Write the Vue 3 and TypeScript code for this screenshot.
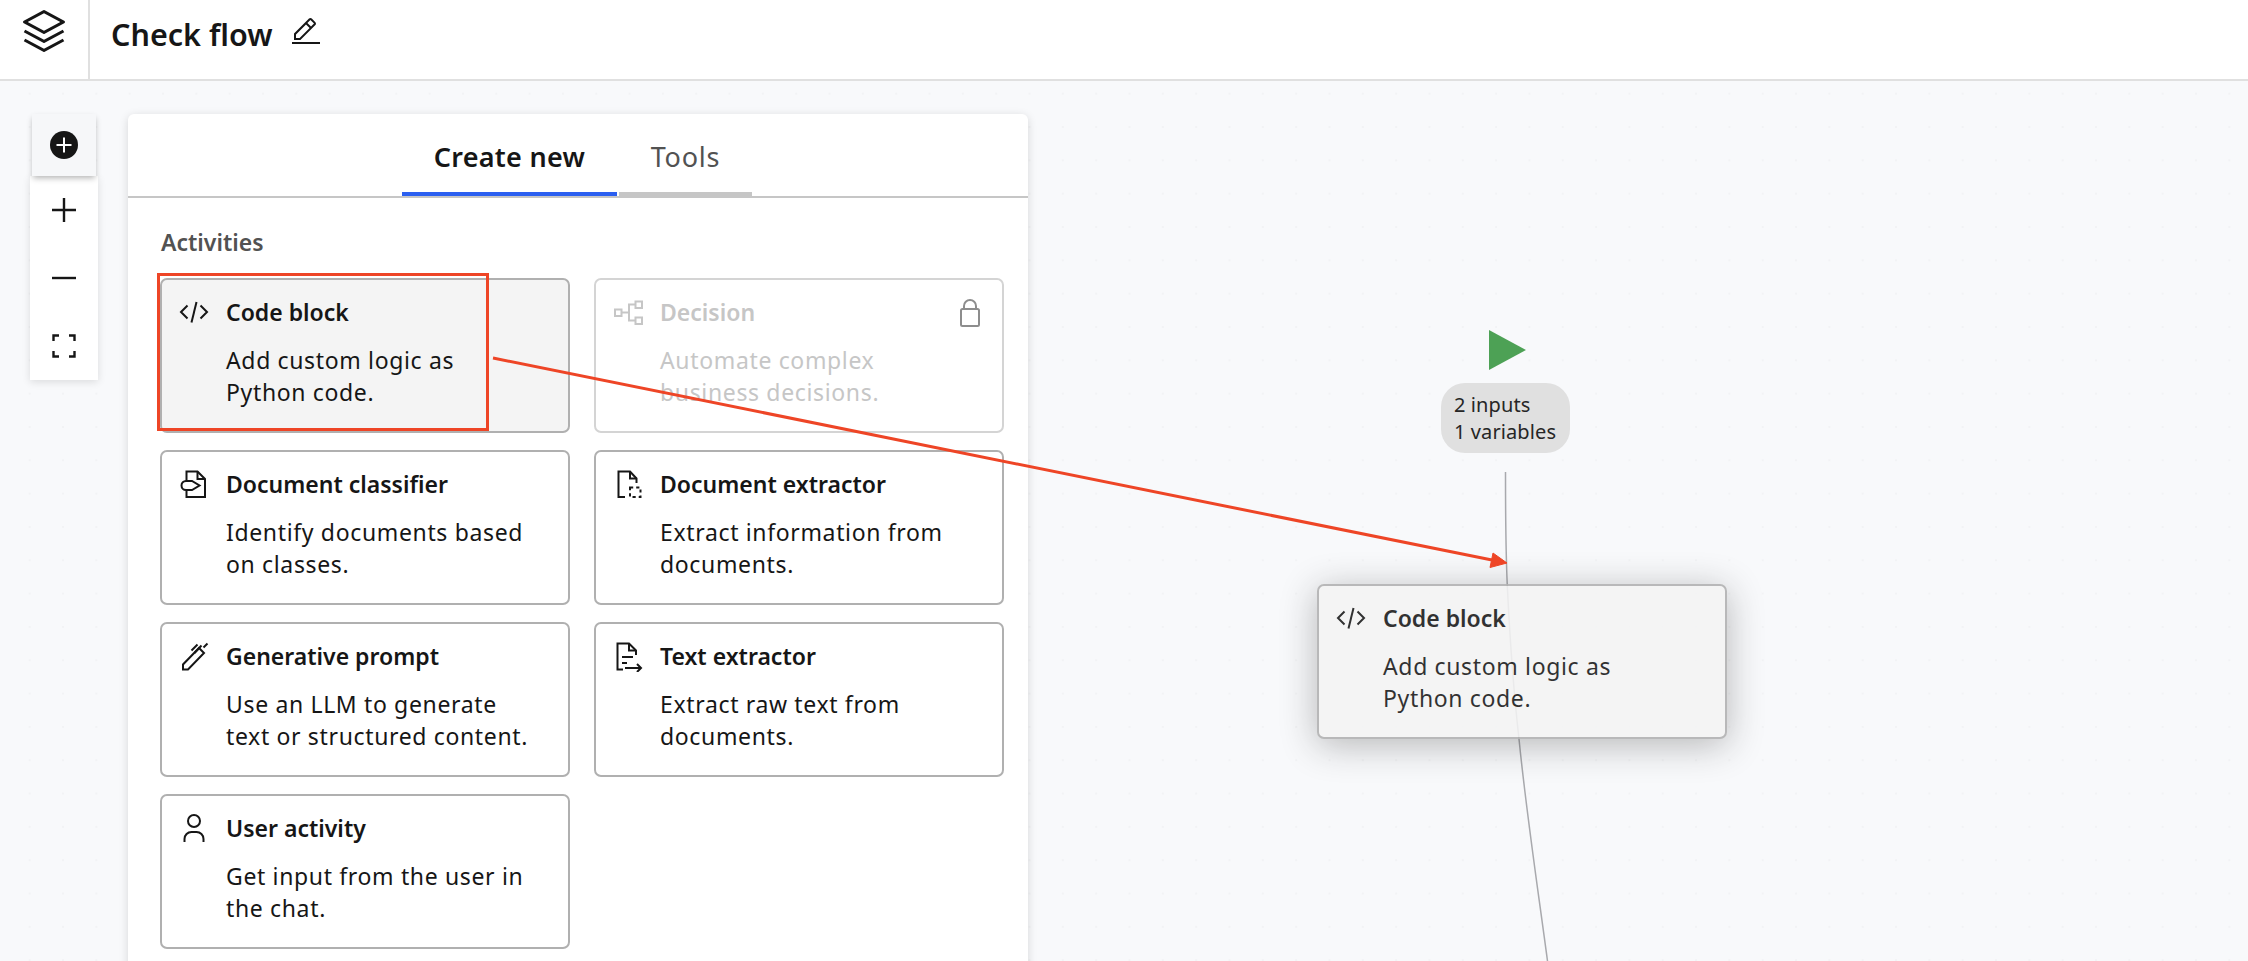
<script setup lang="ts">
interface IconPath { d: string; dash?: string }
interface Card { title: string; lines: string[]; icon: IconPath[]; hover?: boolean; disabled?: boolean }

const codeIcon: IconPath[] = [
  { d: 'M9.5 9.5 3 16l6.5 6.5' },
  { d: 'M22.5 9.5 29 16l-6.5 6.5' },
  { d: 'M18.5 6l-5 20.5' },
]

const cards: Card[] = [
  { title: 'Code block', lines: ['Add custom logic as', 'Python code.'], hover: true, icon: codeIcon },
  {
    title: 'Decision', lines: ['Automate complex', 'business decisions.'], disabled: true,
    icon: [
      { d: 'M3 13.5h6.5v6.5H3z' }, { d: 'M9.5 16.5H17' }, { d: 'M23 8.5h-6v16h6' },
      { d: 'M23.5 5.5H30v6.5h-6.5z' }, { d: 'M23.5 21.5H30V28h-6.5z' },
    ],
  },
  {
    title: 'Document classifier', lines: ['Identify documents based', 'on classes.'],
    icon: [
      { d: 'M8.5 12.5V3.5h11L27 11v18H8.5v-6.5' }, { d: 'M19.5 3.5V11H27' },
      { d: 'M8 13h6l7.5 4.5L14 22H8a4.5 4.5 0 0 1 0-9z' },
    ],
  },
  {
    title: 'Document extractor', lines: ['Extract information from', 'documents.'],
    icon: [
      { d: 'M13 29H6.5V3.5H18l6.5 7V15' }, { d: 'M18 3.5V10.500h6.500' },
      { d: 'M18 19.500h10.500V29H18z', dash: '3.200 3' },
    ],
  },
  {
    title: 'Generative prompt', lines: ['Use an LLM to generate', 'text or structured content.'],
    icon: [
      { d: 'M5 29.500v-5L21 8l5 5L10 29.500z' }, { d: 'M13.500 10.500l6-6' },
      { d: 'M16.500 13l7-7.500' }, { d: 'M25.500 7.500 29.500 3.500' },
    ],
  },
  {
    title: 'Text extractor', lines: ['Extract raw text from', 'documents.'],
    icon: [
      { d: 'M11 29.500H5.500V3.500H17l7 7V15' }, { d: 'M17 3.500V10.500h7' },
      { d: 'M10 17h11' }, { d: 'M10 23h5' }, { d: 'M13 28h16' }, { d: 'M25 24l4 4-4 4' },
    ],
  },
  {
    title: 'User activity', lines: ['Get input from the user in', 'the chat.'],
    icon: [
      { d: 'M16 3a6 6 0 1 1 0 12 6 6 0 0 1 0-12z' },
      { d: 'M6.500 30v-3a7 7 0 0 1 7-7h5a7 7 0 0 1 7 7v3' },
    ],
  },
]
</script>

<template>
  <div class="page">
    <header class="topbar">
      <div class="logo">
        <svg width="48" height="48" viewBox="0 0 32 32" fill="#161616">
          <path d="M16 24a1 1 0 0 1-.47-.12l-13-7 .94-1.76L16 21.860l12.530-6.740.94 1.760-13 7A1 1 0 0 1 16 24z" />
          <path d="M16 30a1 1 0 0 1-.47-.12l-13-7 .94-1.760L16 27.860l12.530-6.740.94 1.760-13 7A1 1 0 0 1 16 30z" />
          <path d="M16 18a1 1 0 0 1-.47-.12l-13-7a1 1 0 0 1 0-1.760l13-7a1 1 0 0 1 .94 0l13 7a1 1 0 0 1 0 1.760l-13 7A1 1 0 0 1 16 18zM5.110 10 16 15.860 26.890 10 16 4.140z" />
        </svg>
      </div>
      <h1 class="title">Check flow</h1>
      <svg class="edit" width="32" height="32" viewBox="0 0 32 32" fill="#161616">
        <path d="M2 26h28v2H2zM25.400 9c.8-.8.8-2 0-2.800l-3.600-3.600c-.8-.8-2-.8-2.800 0L4 17.600V24h6.400L25.400 9zM20.400 4 24 7.600l-3 3L17.400 7l3-3zM6 22v-3.600l10-10 3.600 3.600-10 10H6z" />
      </svg>
    </header>

    <main class="canvas">
      <svg class="edges" viewBox="0 81 2248 880" width="2248" height="880" fill="none">
        <path d="M1505.500 472C1505.500 520 1506 560 1507.500 590C1510 640 1514 695 1519 739C1526 810 1538 890 1547.500 961" stroke="#a8a9ad" stroke-width="1.500" />
      </svg>

      <div class="toolbar">
        <button class="tool tool-active" type="button" aria-label="Add">
          <svg width="28" height="28" viewBox="0 0 28 28">
            <circle cx="14" cy="14" r="14" fill="#161616" />
            <path d="M14 6.500v15M6.500 14h15" stroke="#fff" stroke-width="2" />
          </svg>
        </button>
        <div class="tool-group">
          <button class="tool" type="button" aria-label="Zoom in">
            <svg width="24" height="24" viewBox="0 0 24 24"><path d="M12 0v24M0 12h24" stroke="#161616" stroke-width="2.400" fill="none" /></svg>
          </button>
          <button class="tool" type="button" aria-label="Zoom out">
            <svg width="24" height="24" viewBox="0 0 24 24"><path d="M0 12h24" stroke="#161616" stroke-width="2.400" fill="none" /></svg>
          </button>
          <button class="tool" type="button" aria-label="Fit to screen">
            <svg width="24" height="24" viewBox="0 0 24 24" fill="none" stroke="#161616" stroke-width="2.400">
              <path d="M7 1.500H1.500V7M17 1.500h5.500V7M7 22.500H1.500V17M17 22.500h5.500V17" />
            </svg>
          </button>
        </div>
      </div>

      <section class="panel">
        <nav class="tabs">
          <span class="tab tab-on">Create new</span>
          <span class="tab tab-off">Tools</span>
        </nav>
        <div class="panel-body">
          <h2 class="section">Activities</h2>
          <div class="grid">
            <article
              v-for="c in cards"
              :key="c.title"
              class="card"
              :class="{ hover: c.hover, disabled: c.disabled }"
            >
              <svg class="icon" width="32" height="32" viewBox="0 0 32 32" fill="none" stroke-width="2">
                <path
                  v-for="(p, i) in c.icon"
                  :key="i"
                  :d="p.d"
                  :stroke-dasharray="p.dash"
                  stroke="currentColor"
                />
              </svg>
              <div class="card-text">
                <h3 class="card-title">{{ c.title }}</h3>
                <p v-for="l in c.lines" :key="l" class="card-line">{{ l }}</p>
              </div>
              <svg v-if="c.disabled" class="lock" width="20" height="28" viewBox="0 0 20 28" fill="none" stroke="#8d8d8d" stroke-width="2">
                <path d="M4 10V7a6 6 0 0 1 12 0v3" />
                <rect x="1" y="10" width="18" height="17" rx="1.500" />
              </svg>
            </article>
          </div>
        </div>
      </section>

      <div class="play"></div>
      <div class="badge">
        <span>2 inputs</span>
        <span>1 variables</span>
      </div>

      <article class="card hover ghost">
        <svg class="icon" width="32" height="32" viewBox="0 0 32 32" fill="none" stroke-width="2">
          <path v-for="(p, i) in codeIcon" :key="i" :d="p.d" stroke="currentColor" />
        </svg>
        <div class="card-text">
          <h3 class="card-title">Code block</h3>
          <p class="card-line">Add custom logic as</p>
          <p class="card-line">Python code.</p>
        </div>
      </article>

      <svg class="annot" viewBox="0 81 2248 880" width="2248" height="880" fill="none">
        <rect x="158.500" y="274.500" width="329" height="155" stroke="#ee4526" stroke-width="3" />
        <path d="M493 358 1492 560" stroke="#ee4526" stroke-width="3" />
        <path d="M1507 563 1490 567.500 1493 553z" fill="#ee4526" stroke="#ee4526" />
      </svg>
    </main>
  </div>
</template>

<style>
html, body { margin: 0; padding: 0; background: #fff; }
</style>

<style scoped>
.page {
  width: 2248px;
  height: 961px;
  display: flex;
  flex-direction: column;
  overflow: hidden;
  font-family: "Noto Sans", "Open Sans", sans-serif;
  color: #161616;
}
.topbar {
  height: 81px;
  flex: none;
  box-sizing: border-box;
  display: flex;
  align-items: center;
  background: #fff;
  border-bottom: 2px solid #e0e0e0;
}
.logo {
  width: 88px;
  height: 79px;
  flex: none;
  display: flex;
  justify-content: center;
  align-items: flex-start;
  border-right: 2px solid #e0e0e0;
}
.logo svg { margin-top: 7px; margin-left: -1px; }
.title {
  margin: -12px 0 0 21px;
  font-size: 30.500px;
  font-weight: 600;
  line-height: 40px;
}
.edit { margin: -16px 0 0 17px; }
.canvas {
  position: relative;
  flex: 1;
  overflow: hidden;
  background-color: #f8f9fb;
  background-image: radial-gradient(circle, #f2f3f5 1px, transparent 1.500px);
  background-size: 33.330px 33.330px;
  background-position: 13px -4px;
}
.edges, .annot { position: absolute; left: 0; top: 0; pointer-events: none; }
.annot { z-index: 5; }
.toolbar {
  position: absolute;
  left: 30px;
  top: 33px;
  width: 68px;
  display: flex;
  flex-direction: column;
  align-items: center;
}
.tool {
  width: 68px;
  height: 68px;
  padding: 0;
  border: 0;
  background: transparent;
  display: flex;
  align-items: center;
  justify-content: center;
}
.tool-active {
  position: relative;
  z-index: 1;
  width: 64px;
  height: 62px;
  background: #f6f7f9;
  box-shadow: 0 3px 6px -1px rgba(0, 0, 0, 0.3);
}
.tool-group {
  width: 68px;
  height: 204px;
  background: #fff;
  box-shadow: 0 2px 8px rgba(0, 0, 0, 0.12);
}
.panel {
  position: absolute;
  left: 128px;
  top: 33px;
  width: 900px;
  height: 900px;
  background: #fff;
  border-radius: 6px 6px 0 0;
  box-shadow: 0 2px 10px rgba(0, 0, 0, 0.14);
}
.tabs {
  height: 84px;
  box-sizing: border-box;
  display: flex;
  justify-content: center;
  gap: 2px;
  border-bottom: 2px solid #c6c6c6;
  padding-right: 2px;
}
.tab {
  box-sizing: border-box;
  height: 82px;
  border-bottom: 4px solid #c6c6c6;
  font-size: 27px;
  line-height: 86px;
  text-align: center;
  color: #525252;
}
.tab-on {
  width: 215px;
  font-weight: 600;
  letter-spacing: 0.3px;
  color: #161616;
  border-bottom-color: #2b5ff0;
}
.tab-off {
  width: 133px;
  letter-spacing: 0.8px;
}
.panel-body { padding: 27px 25px 0 32px; }
.section {
  margin: 0 0 19px 1px;
  font-size: 23px;
  line-height: 34px;
  font-weight: 600;
  color: #525252;
}
.grid {
  display: grid;
  grid-template-columns: 410px 410px;
  grid-auto-rows: 155px;
  column-gap: 24px;
  row-gap: 17px;
}
.card {
  position: relative;
  box-sizing: border-box;
  display: flex;
  align-items: flex-start;
  padding: 16px 16px 0 16px;
  background: #fff;
  border: 2px solid #b0b0b0;
  border-radius: 7px;
  gap: 16px;
}
.card.hover { background: #f4f4f4; }
.card.disabled {
  border-color: #d4d4d4;
  color: #c6c6c6;
}
.icon { flex: none; }
.card-title {
  margin: 0 0 16px;
  font-size: 23px;
  line-height: 32px;
  font-weight: 600;
}
.card-line {
  margin: 0;
  font-size: 23px;
  line-height: 32px;
  letter-spacing: 0.65px;
  white-space: nowrap;
}
.lock {
  position: absolute;
  right: 22px;
  top: 19px;
}
.play {
  position: absolute;
  left: 1489px;
  top: 249px;
  width: 0;
  height: 0;
  border-left: 37px solid #4da155;
  border-top: 20px solid transparent;
  border-bottom: 20px solid transparent;
}
.badge {
  position: absolute;
  left: 1441px;
  top: 302px;
  box-sizing: border-box;
  width: 129px;
  height: 70px;
  padding: 8px 0 0 13px;
  display: flex;
  flex-direction: column;
  background: #e0e0e0;
  border-radius: 24px;
  font-size: 20px;
  line-height: 27px;
  letter-spacing: 0.1px;
  color: #262626;
}
.ghost {
  position: absolute;
  left: 1317px;
  top: 503px;
  width: 410px;
  height: 155px;
  opacity: 0.88;
  z-index: 2;
  box-shadow: 0 6px 36px rgba(0, 0, 0, 0.3);
}
</style>
